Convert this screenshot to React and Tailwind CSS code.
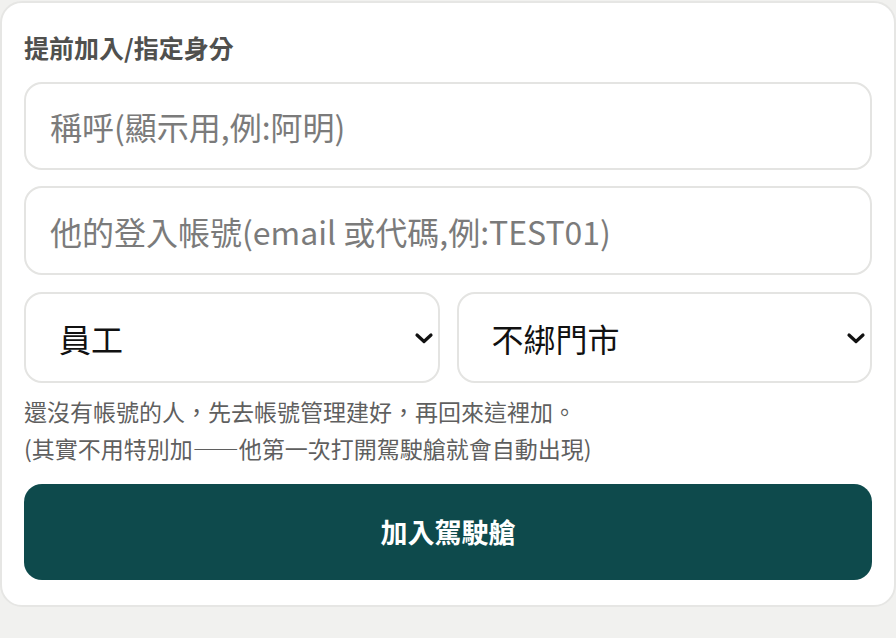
import { useState } from 'react';

const font = { fontFamily: '"Noto Sans CJK TC", "Noto Sans", sans-serif' };

function Chevron() {
  return (
    <svg
      className="pointer-events-none absolute right-[6px] top-1/2 -translate-y-1/2"
      width="20"
      height="12"
      viewBox="0 0 20 12"
      fill="none"
    >
      <path d="M3 3l7 6.5 7-6.5" stroke="#111" strokeWidth="3.2" strokeLinecap="round" strokeLinejoin="round" />
    </svg>
  );
}

export default function App() {
  const [nickname, setNickname] = useState('');
  const [account, setAccount] = useState('');
  const [role, setRole] = useState('staff');
  const [store, setStore] = useState('none');

  return (
    <div className="min-h-screen bg-[#f1f1ef] pt-[1px]" style={font}>
      <div className="rounded-[22px] border-2 border-[#e6e6e4] bg-white px-[22px] pt-[28px] pb-[25px]">
        <h2 className="text-[25px] font-bold leading-[32px] text-[#50504e]">提前加入/指定身分</h2>

        <input
          value={nickname}
          onChange={(e) => setNickname(e.target.value)}
          placeholder="稱呼(顯示用,例:阿明)"
          className="mt-[19px] block h-[88px] w-full rounded-[18px] border-2 border-[#e4e4e2] px-[24px] text-[32px] text-[#222] outline-none placeholder:text-[#7b7b7b]"
        />
        <input
          value={account}
          onChange={(e) => setAccount(e.target.value)}
          placeholder="他的登入帳號(email 或代碼,例:TEST01)"
          className="mt-[16px] block h-[89px] w-full rounded-[18px] border-2 border-[#e4e4e2] px-[24px] text-[32px] text-[#222] outline-none placeholder:text-[#7b7b7b]"
        />

        <div className="mt-[17px] grid grid-cols-2 gap-[17px]">
          <div className="relative">
            <select
              value={role}
              onChange={(e) => setRole(e.target.value)}
              className="block h-[91px] w-full appearance-none rounded-[18px] border-2 border-[#e4e4e2] bg-white pl-[33px] pr-[40px] text-[32px] text-[#111] outline-none"
            >
              <option value="staff">員工</option>
              <option value="manager">店長</option>
              <option value="admin">管理員</option>
            </select>
            <Chevron />
          </div>
          <div className="relative">
            <select
              value={store}
              onChange={(e) => setStore(e.target.value)}
              className="block h-[91px] w-full appearance-none rounded-[18px] border-2 border-[#e4e4e2] bg-white pl-[33px] pr-[40px] text-[32px] text-[#111] outline-none"
            >
              <option value="none">不綁門市</option>
            </select>
            <Chevron />
          </div>
        </div>

        <p className="mt-[10px] text-[23px] leading-[37px] text-[#5f5f5f]">
          還沒有帳號的人，先去帳號管理建好，再回來這裡加。
          <br />
          (其實不用特別加<span className="[font-feature-settings:'fwid']">——</span>他第一次打開駕駛艙就會自動出現)
        </p>

        <button className="mt-[17px] flex h-[96px] w-full items-center justify-center rounded-[18px] bg-[#0e4a4c] text-[27px] font-bold text-white">
          加入駕駛艙
        </button>
      </div>
    </div>
  );
}
